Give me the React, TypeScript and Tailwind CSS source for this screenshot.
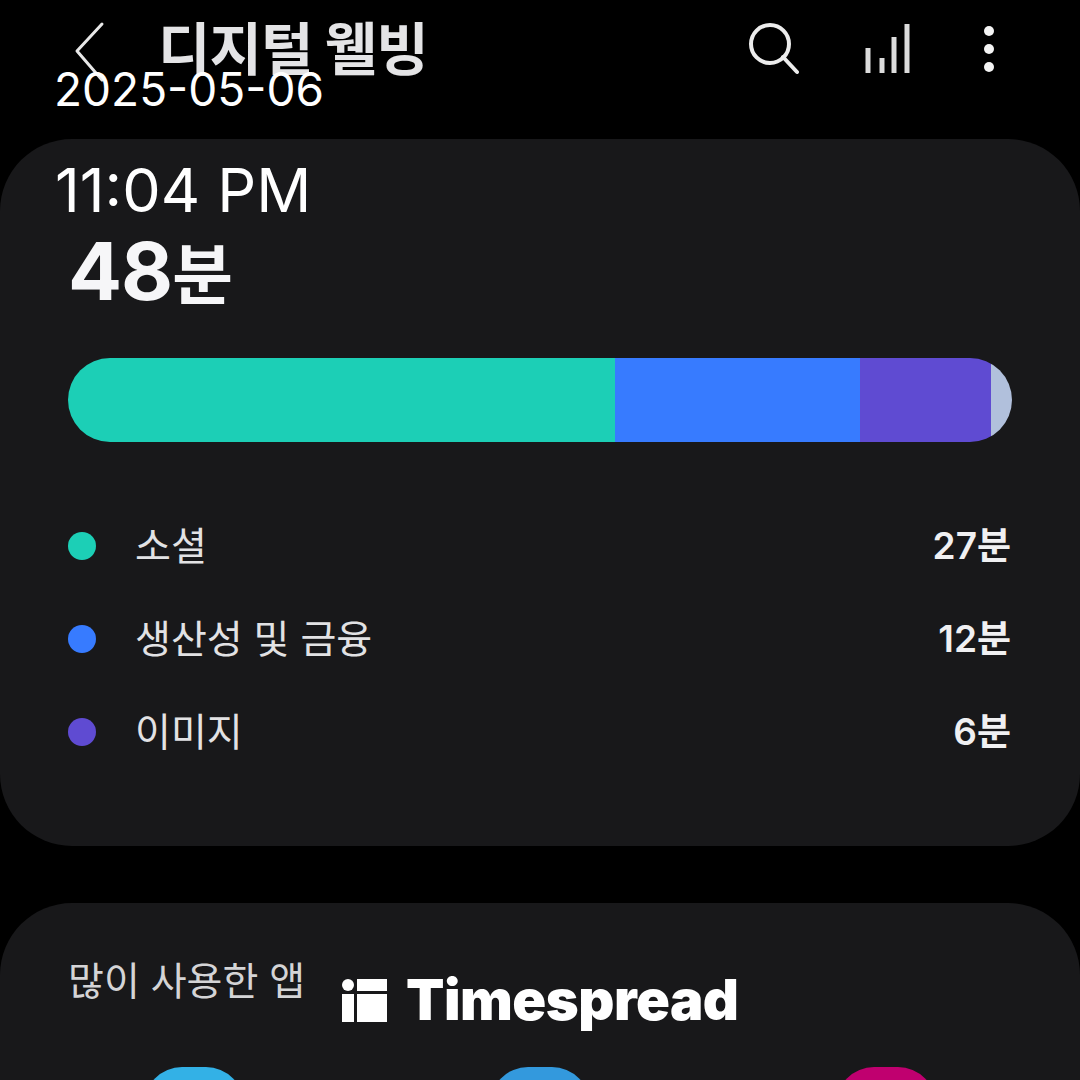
import React from "react";

const KO = "font-['Inter','Noto_Sans_CJK_KR',sans-serif]";

const rows = [
	{ name: "소셜", time: "27분", dot: "bg-[#1ccfb6]" },
	{ name: "생산성 및 금융", time: "12분", dot: "bg-[#377bff]" },
	{ name: "이미지", time: "6분", dot: "bg-[#5f4bd2]" },
];

const LegendRow = ({ name, time, dot }: { name: string; time: string; dot: string }) => (
	<div className="flex h-[93px] items-center justify-between pl-[68px] pr-[69px]">
		<div className="flex items-center gap-[39px]">
			<span className={`h-[28px] w-[28px] rounded-full ${dot}`} />
			<span className="text-[39px] leading-none text-[#e2e2e4]">{name}</span>
		</div>
		<span className="text-[37px] leading-none font-semibold text-[#f0f0f2]">{time}</span>
	</div>
);

const App = () => {
	return (
		<div className={`relative h-[1080px] w-[1080px] overflow-hidden bg-black ${KO}`}>
			{/* app bar */}
			<header className="flex h-[139px] items-start justify-between pt-[18px] pl-[74px] pr-[86px]">
				<div className="flex items-start gap-[50px]">
					<svg width="34" height="68" viewBox="0 0 34 68" fill="none" stroke="#e8e8e8" strokeWidth="3" strokeLinecap="round" strokeLinejoin="round">
						<path d="M28 6 L3 33 L28 62" />
					</svg>
					<h1 className="text-[57px] leading-[64px] font-bold text-[#e4e4e6] tracking-[-1px]">디지털 웰빙</h1>
				</div>
				<div className="flex items-start gap-[66px] pt-[5px]">
					<svg width="52" height="52" viewBox="0 0 52 52" fill="none" stroke="#ececec" strokeWidth="4" strokeLinecap="round">
						<circle cx="23" cy="21" r="19" />
						<path d="M36 34 L50 49" />
					</svg>
					<svg width="46" height="52" viewBox="0 0 46 52" fill="none" stroke="#dcdcdc" strokeWidth="5">
						<path d="M3 50 V25 M17 50 V35 M29 50 V14 M42 50 V1" />
					</svg>
					<svg width="10" height="52" viewBox="0 0 10 52" fill="#f4f4f4" className="ml-[7px]">
						<circle cx="5" cy="8" r="5" />
						<circle cx="5" cy="26" r="5" />
						<circle cx="5" cy="44" r="5" />
					</svg>
				</div>
			</header>

			{/* screen time card */}
			<section className="h-[707px] rounded-[72px] bg-[#18181a]">
				<p className="flex h-[174px] items-end pl-[68px] font-bold text-[#f6f6f8]">
					<span className="text-[80px] leading-[84px] tracking-[-1px]">48</span>
					<span className="text-[66px] leading-[76px]">분</span>
				</p>
				<div className="mx-[68px] mt-[45px] flex h-[84px] overflow-hidden rounded-full">
					<div className="w-[547px] bg-[#1ccfb6]" />
					<div className="w-[245px] bg-[#377bff]" />
					<div className="w-[131px] bg-[#5f4bd2]" />
					<div className="flex-1 bg-[#b1c0dc]" />
				</div>
				<div className="mt-[57px]">
					{rows.map((r) => (
						<LegendRow key={r.name} {...r} />
					))}
				</div>
			</section>

			{/* most used apps card */}
			<section className="mt-[57px] h-[300px] rounded-[72px] bg-[#18181a] pl-[68px]">
				<p className="pt-[51px] text-[39px] leading-[54px] text-[#d4d4d6]">많이 사용한 앱</p>
				<div className="mt-[59px] flex gap-[246px] pl-[76px]">
					<div className="h-[100px] w-[100px] rounded-[38px] bg-[#33b1e6]" />
					<div className="h-[100px] w-[100px] rounded-[38px] bg-[#3399dd]" />
					<div className="h-[100px] w-[100px] rounded-[38px] bg-[#c0006f]" />
				</div>
			</section>

			{/* date stamp over the screenshot */}
			<div className="absolute left-[54px] top-[58px] font-['Inter',sans-serif] text-[46px] leading-[62px] font-normal text-white">2025-05-06</div>
			<div className="absolute left-[55px] top-[150px] font-['Inter',sans-serif] text-[61px] leading-[80px] font-normal text-white">11:04 PM</div>

			{/* watermark */}
			<div className="absolute left-[342px] top-[970px] flex items-center gap-[19px]">
				<svg width="45" height="43" viewBox="0 0 45 43" fill="#fff" className="mt-[1px]">
					<circle cx="6" cy="6" r="6" />
					<rect x="0" y="15" width="12" height="28" />
					<rect x="15" y="0" width="30" height="12" />
					<rect x="15" y="15" width="30" height="28" />
				</svg>
				<span className="font-['Inter',sans-serif] text-[56px] leading-[60px] font-black text-white tracking-[-0.5px]">Timespread</span>
			</div>
		</div>
	);
};

export default App;
